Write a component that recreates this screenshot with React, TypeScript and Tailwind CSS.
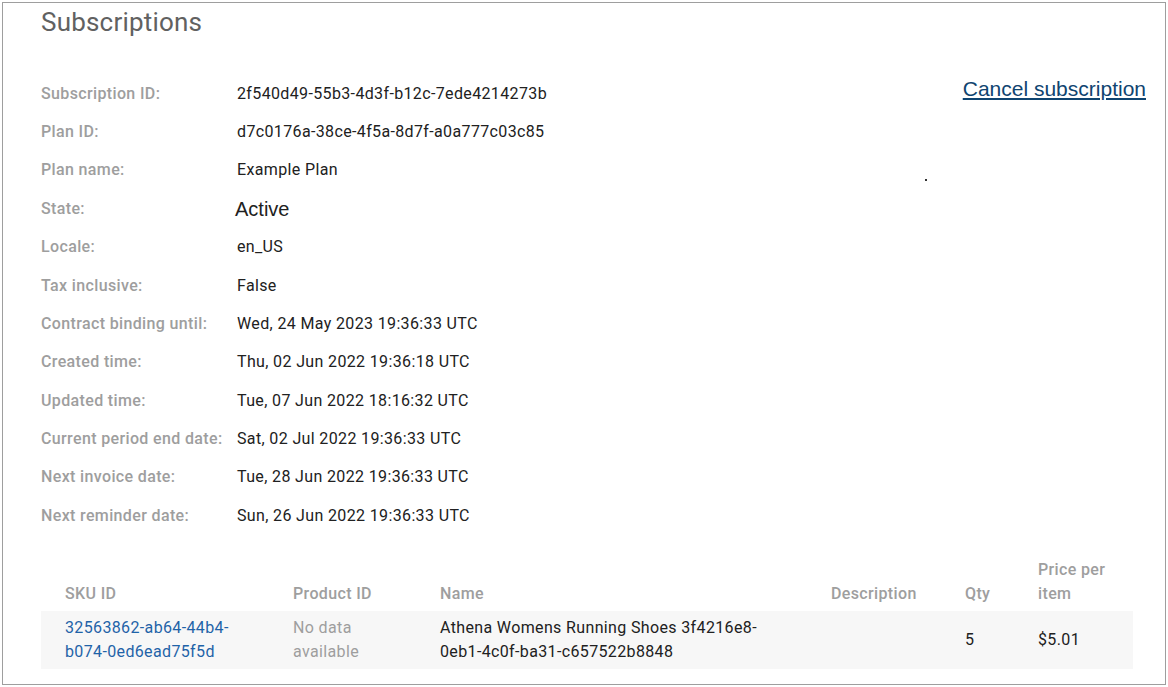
const details: { label: string; value: string; big?: boolean }[] = [
  { label: "Subscription ID:", value: "2f540d49-55b3-4d3f-b12c-7ede4214273b" },
  { label: "Plan ID:", value: "d7c0176a-38ce-4f5a-8d7f-a0a777c03c85" },
  { label: "Plan name:", value: "Example Plan" },
  { label: "State:", value: "Active", big: true },
  { label: "Locale:", value: "en_US" },
  { label: "Tax inclusive:", value: "False" },
  { label: "Contract binding until:", value: "Wed, 24 May 2023 19:36:33 UTC" },
  { label: "Created time:", value: "Thu, 02 Jun 2022 19:36:18 UTC" },
  { label: "Updated time:", value: "Tue, 07 Jun 2022 18:16:32 UTC" },
  { label: "Current period end date:", value: "Sat, 02 Jul 2022 19:36:33 UTC" },
  { label: "Next invoice date:", value: "Tue, 28 Jun 2022 19:36:33 UTC" },
  { label: "Next reminder date:", value: "Sun, 26 Jun 2022 19:36:33 UTC" },
];

const cols = "grid grid-cols-[228px_147px_391px_134px_73px_119px]";

export default function App() {
  return (
    <div className="p-[2px] font-['Roboto',sans-serif] text-[16px] tracking-[0.36px]">
      <div className="h-[683px] w-[1164px] border border-[#9e9e9e] bg-white pl-[38px] pr-[19px]">
        <h1 className="mt-[3px] text-[26px] leading-[32px] tracking-[0.2px] text-[#616161]">
          Subscriptions
        </h1>

        <div className="mt-[36.4px] flex items-start justify-between">
          <div className="flex flex-col">
            {details.map((d) => (
              <div key={d.label} className="flex h-[38.4px] items-center">
                <span className="w-[196px] font-medium text-[#9e9e9e]">
                  {d.label}
                </span>
                {d.big ? (
                  <span className="-ml-[2px] font-['Liberation_Sans',Arial,sans-serif] text-[20px] tracking-normal text-[#212121]">
                    {d.value}
                  </span>
                ) : (
                  <span className="text-[#212121]">{d.value}</span>
                )}
              </div>
            ))}
          </div>
          <div className="flex flex-col items-end">
            <a
              href="#"
              className="mt-[2.6px] font-['Liberation_Sans',Arial,sans-serif] text-[21px] leading-[24px] tracking-normal text-[#0f4470] underline"
            >
              Cancel subscription
            </a>
            <span className="mr-[219px] mt-[78px] h-[2px] w-[2px] bg-[#333]" />
          </div>
        </div>

        <div className="mr-[13px] mt-[16.6px]">
          <div
            className={`${cols} items-end pb-[5px] pt-[6px] font-medium leading-[24px] text-[#9e9e9e]`}
          >
            <div className="px-[24px]">SKU ID</div>
            <div className="px-[24px]">Product ID</div>
            <div className="px-[24px]">Name</div>
            <div className="px-[24px]">Description</div>
            <div className="px-[24px]">Qty</div>
            <div className="px-[24px]">Price per item</div>
          </div>
          <div
            className={`${cols} h-[58px] items-center bg-[#f7f7f7] leading-[24px] text-[#212121]`}
          >
            <a href="#" className="px-[24px] text-[#1f63a8]">
              32563862-ab64-44b4-b074-0ed6ead75f5d
            </a>
            <div className="px-[24px] text-[#9e9e9e]">No data available</div>
            <div className="px-[24px]">
              Athena Womens Running Shoes 3f4216e8-0eb1-4c0f-ba31-c657522b8848
            </div>
            <div className="px-[24px]" />
            <div className="px-[24px]">5</div>
            <div className="px-[24px]">$5.01</div>
          </div>
        </div>
      </div>
    </div>
  );
}
